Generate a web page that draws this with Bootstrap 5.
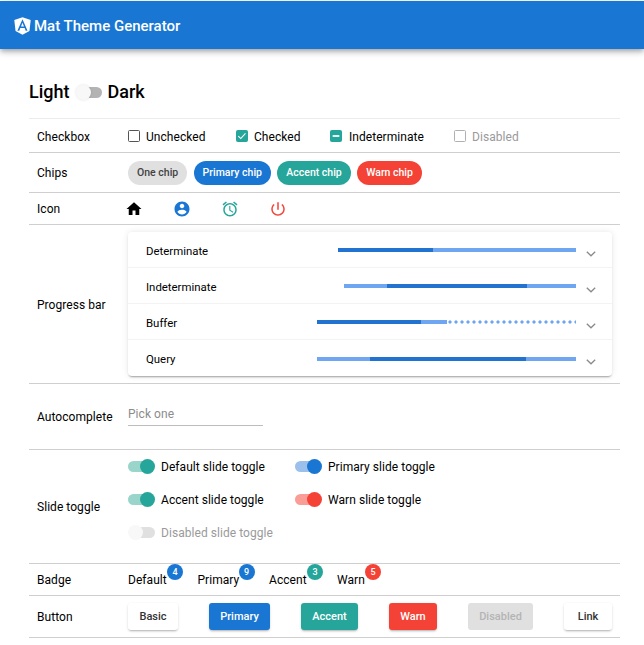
<!doctype html>
<html lang="en">
<head>
<meta charset="utf-8">
<title>Mat Theme Generator</title>
<link href="https://cdn.jsdelivr.net/npm/bootstrap@5.3.0/dist/css/bootstrap.min.css" rel="stylesheet">
<style>
body{font-family:Roboto,"Liberation Sans",sans-serif;font-size:12px;color:#000;background:#fff;padding-top:1px;overflow:hidden}
.app-bar{height:48px;background:#1976d2;color:#fff;padding:2px 0 0 14px;gap:3px;font-size:15px;font-weight:500;box-shadow:0 2px 4px -1px rgba(0,0,0,.2),0 4px 5px rgba(0,0,0,.14),0 1px 10px rgba(0,0,0,.12);position:relative}
.app-logo{width:17px;height:18px;margin-top:-1px}
.page-wrap{margin:0 24px 0 29px}
.mode-line{height:69px;gap:6px;font-size:18px;font-weight:500;padding-top:17px;line-height:24px}
.theme-row{border-top:1px solid #cfcfcf;letter-spacing:.05px}
.theme-row.first-row{border-top-color:#ececec}
.theme-row.last-row{border-bottom:1px solid #cfcfcf}
.row-name{width:99px;padding-left:8px;flex:none}
.row-check{height:34px;padding-top:2px}.row-chip{height:40px}.row-icon{height:32px}.row-prog{height:159px}.row-auto{height:66px}.row-slide{height:114px}.row-badge{height:32px}.row-btn{height:43px}
.row-prog .row-name{padding-top:2px}
.check-item{gap:6px;margin-right:24px}
.check-wide{gap:7px}
.check-box{width:12px;height:12px;border:1.5px solid #555;border-radius:1.5px;flex:none;margin-top:-1px}
.check-box.on{background:#26a69a;border-color:#26a69a}
.check-box.off{border-color:#b0b0b0}
.check-box svg{display:block;width:100%;height:100%}
.muted-text{color:#9a9a9a}
.chip-row{gap:6.4px}
.chip-pill{height:24px;border-radius:12px;padding:0 9px;font-weight:500;font-size:10.5px;line-height:24px;background:#e0e0e0;color:#424242;letter-spacing:0}
.bg-prim{background:#1976d2;color:#fff}.bg-acc{background:#26a69a;color:#fff}.bg-warn{background:#f44336;color:#fff}
.icon-set{gap:30px;margin-left:-3px}
.icon-set svg{width:18px;height:18px;display:block}
.panel-box{width:484px;margin-top:-1px;box-shadow:0 2px 2px -1px rgba(0,0,0,.35),0 0 6px rgba(0,0,0,.1);border-radius:4px;background:#fff}
.panel-line{height:36px;padding:0 0 0 18px;border-bottom:1px solid #f3f3f3}
.panel-line:last-child{border-bottom:0}
.panel-name{width:171px;flex:none;margin-top:5px;font-size:11.4px;letter-spacing:0}
.bar-zone{width:259px;flex:none;height:4px;margin-top:2px;justify-content:flex-end}
.bar-track{height:4px;background:#6ea6f2;position:relative}
.bar-fill{position:absolute;top:0;bottom:0;background:#2273cf}
.bar-dots{flex:1;height:4px;background-image:radial-gradient(circle,#6ea6f2 1.4px,transparent 1.8px);background-size:6px 4px;background-repeat:repeat-x}
.panel-chev{width:10px;height:6px;margin-left:10px;margin-top:9px;flex:none}
.pick-field{width:135px;height:26px;padding-top:5px;border-bottom:1px solid #bdbdbd;color:#8c8c8c;line-height:18px;margin-top:-7px}
.slide-grid{row-gap:15px;width:340px;margin-top:-14px}
.slide-item{width:167px;gap:6px;height:18px}
.slide-sw{width:27px;height:15px;position:relative;flex:none}
.slide-sw::before{content:"";position:absolute;left:0;right:5px;top:2px;bottom:2px;border-radius:6px;background:var(--trk)}
.slide-sw::after{content:"";position:absolute;right:0;top:0;width:15px;height:15px;border-radius:50%;background:var(--thm)}
.sw-acc{--trk:#9ad5cc;--thm:#26a69a}.sw-prim{--trk:#9cc0ec;--thm:#1976d2}.sw-warn{--trk:#fb9d97;--thm:#f44336}
.sw-off::before{left:7px;right:0;background:var(--trk)}
.sw-off::after{right:auto;left:0;background:#f8f8f8;box-shadow:0 0 3px rgba(0,0,0,.12)}
.sw-grey{--trk:#b3b3b3}.sw-dim{--trk:#e0e0e0}.sw-dim::after{background:#f8f8f8;box-shadow:none}
.sw-big{width:26px}
.badge-group{position:relative}
.badge-dot{position:absolute;width:16px;height:16px;border-radius:50%;top:-7px;font-size:9px;font-weight:500;line-height:16px;text-align:center}
.act-btn{height:27px;border-radius:3px;font-size:11px;font-weight:500;line-height:27px;text-align:center;margin-right:31px;box-shadow:0 2px 2px -1px rgba(0,0,0,.22),0 1px 3px rgba(0,0,0,.12);background:#fff;color:#333;letter-spacing:0}
.act-btn.bg-prim{color:#fff;background:#1976d2}.act-btn.bg-acc{color:#fff;background:#26a69a}.act-btn.bg-warn{color:#fff;background:#f44336}
.act-btn.is-off{background:#e0e0e0;color:#b4b4b4;box-shadow:none}
</style>
</head>
<body>
<nav class="app-bar d-flex align-items-center">
  <svg class="app-logo" viewBox="30 28 190 204" aria-hidden="true"><path fill="#fff" fill-rule="evenodd" d="M125 30 31.9 63.2 46.1 186.3 125 230l78.9-43.7L218.1 63.2zM125 52.1 182 182.6h-20.6l-11.7-29.2h-49.4l-11.7 29.2H66.8zm0 42.4-17 40.9h34z"/></svg>
  <span>Mat Theme Generator</span>
</nav>
<main class="page-wrap">
  <div class="mode-line d-flex align-items-center">
    <span>Light</span><span class="slide-sw sw-off sw-grey sw-big"></span><span>Dark</span>
  </div>

  <div class="theme-row first-row row-check d-flex align-items-center">
    <div class="row-name">Checkbox</div>
    <div class="d-flex">
      <div class="check-item d-flex align-items-center" style="width:84px"><span class="check-box"></span>Unchecked</div>
      <div class="check-item d-flex align-items-center" style="width:70px"><span class="check-box on"><svg viewBox="0 0 9 9"><path d="M1.2 4.6 3.4 6.8 7.6 2.2" fill="none" stroke="#fff" stroke-width="1"/></svg></span>Checked</div>
      <div class="check-item check-wide d-flex align-items-center" style="width:100px"><span class="check-box on"><svg viewBox="0 0 9 9"><path d="M1.5 4.5h6" fill="none" stroke="#fff" stroke-width="1.6"/></svg></span>Indeterminate</div>
      <div class="check-item d-flex align-items-center muted-text"><span class="check-box off"></span>Disabled</div>
    </div>
  </div>

  <div class="theme-row row-chip d-flex align-items-center">
    <div class="row-name">Chips</div>
    <div class="d-flex chip-row">
      <span class="chip-pill">One chip</span>
      <span class="chip-pill bg-prim">Primary chip</span>
      <span class="chip-pill bg-acc">Accent chip</span>
      <span class="chip-pill bg-warn">Warn chip</span>
    </div>
  </div>

  <div class="theme-row row-icon d-flex align-items-center">
    <div class="row-name">Icon</div>
    <div class="d-flex icon-set">
      <svg viewBox="0 0 24 24"><path fill="#000" d="M10 20v-6h4v6h5v-8h3L12 3 2 12h3v8z"/></svg>
      <svg viewBox="0 0 24 24"><path fill="#1976d2" d="M12 2C6.48 2 2 6.48 2 12s4.48 10 10 10 10-4.48 10-10S17.52 2 12 2zm0 3c1.66 0 3 1.34 3 3s-1.34 3-3 3-3-1.34-3-3 1.34-3 3-3zm0 14.2c-2.5 0-4.71-1.28-6-3.22.03-1.99 4-3.08 6-3.08 1.99 0 5.97 1.09 6 3.08-1.29 1.94-3.5 3.22-6 3.22z"/></svg>
      <svg viewBox="0 0 24 24"><path fill="#26a69a" d="M22 5.72l-4.6-3.86-1.29 1.53 4.6 3.86L22 5.72zM7.88 3.39L6.6 1.86 2 5.71l1.29 1.53 4.59-3.85zM12.5 8H11v6l4.75 2.85.75-1.23-4-2.37V8zM12 4c-4.97 0-9 4.03-9 9s4.02 9 9 9c4.97 0 9-4.03 9-9s-4.03-9-9-9zm0 16c-3.87 0-7-3.13-7-7s3.13-7 7-7 7 3.13 7 7-3.13 7-7 7z"/></svg>
      <svg viewBox="0 0 24 24"><path fill="#f44336" d="M13 3h-2v10h2V3zm4.83 2.17l-1.42 1.42C17.99 7.86 19 9.81 19 12c0 3.87-3.13 7-7 7s-7-3.13-7-7c0-2.19 1.01-4.14 2.58-5.42L6.17 5.17C4.23 6.82 3 9.26 3 12c0 4.97 4.03 9 9 9s9-4.03 9-9c0-2.74-1.23-5.18-3.17-6.83z"/></svg>
    </div>
  </div>

  <div class="theme-row row-prog d-flex align-items-center">
    <div class="row-name">Progress bar</div>
    <div class="panel-box">
      <div class="panel-line d-flex align-items-center"><span class="panel-name">Determinate</span>
        <div class="bar-zone d-flex"><div class="bar-track" style="width:238px"><div class="bar-fill" style="left:0;width:95px"></div></div></div>
        <svg class="panel-chev" viewBox="0 0 10 6"><path d="M.8.8 5 4.8 9.2.8" fill="none" stroke="#8a8a8a" stroke-width="1.3"/></svg></div>
      <div class="panel-line d-flex align-items-center"><span class="panel-name">Indeterminate</span>
        <div class="bar-zone d-flex"><div class="bar-track" style="width:232px"><div class="bar-fill" style="left:43px;width:140px"></div></div></div>
        <svg class="panel-chev" viewBox="0 0 10 6"><path d="M.8.8 5 4.8 9.2.8" fill="none" stroke="#8a8a8a" stroke-width="1.3"/></svg></div>
      <div class="panel-line d-flex align-items-center"><span class="panel-name">Buffer</span>
        <div class="bar-zone d-flex align-items-center"><div class="bar-track flex-none" style="width:130px"><div class="bar-fill" style="left:0;width:104px"></div></div><div class="bar-dots"></div></div>
        <svg class="panel-chev" viewBox="0 0 10 6"><path d="M.8.8 5 4.8 9.2.8" fill="none" stroke="#8a8a8a" stroke-width="1.3"/></svg></div>
      <div class="panel-line d-flex align-items-center"><span class="panel-name">Query</span>
        <div class="bar-zone d-flex"><div class="bar-track" style="width:259px"><div class="bar-fill" style="left:53px;width:156px"></div></div></div>
        <svg class="panel-chev" viewBox="0 0 10 6"><path d="M.8.8 5 4.8 9.2.8" fill="none" stroke="#8a8a8a" stroke-width="1.3"/></svg></div>
    </div>
  </div>

  <div class="theme-row row-auto d-flex align-items-center">
    <div class="row-name">Autocomplete</div>
    <div class="pick-field">Pick one</div>
  </div>

  <div class="theme-row row-slide d-flex align-items-center">
    <div class="row-name">Slide toggle</div>
    <div class="d-flex flex-wrap slide-grid">
      <div class="slide-item d-flex align-items-center"><span class="slide-sw sw-acc"></span>Default slide toggle</div>
      <div class="slide-item d-flex align-items-center"><span class="slide-sw sw-prim"></span>Primary slide toggle</div>
      <div class="slide-item d-flex align-items-center"><span class="slide-sw sw-acc"></span>Accent slide toggle</div>
      <div class="slide-item d-flex align-items-center"><span class="slide-sw sw-warn"></span>Warn slide toggle</div>
      <div class="slide-item d-flex align-items-center w-100 muted-text"><span class="slide-sw sw-off sw-dim"></span>Disabled slide toggle</div>
    </div>
  </div>

  <div class="theme-row row-badge d-flex align-items-center">
    <div class="row-name">Badge</div>
    <div class="d-flex">
      <span class="badge-group" style="width:69.5px"><span>Default</span><span class="badge-dot bg-prim" style="left:39px">4</span></span>
      <span class="badge-group" style="width:71.5px">Primary<span class="badge-dot bg-prim" style="left:41px">9</span></span>
      <span class="badge-group" style="width:68px">Accent<span class="badge-dot bg-acc" style="left:38px">3</span></span>
      <span class="badge-group">Warn<span class="badge-dot bg-warn" style="left:28px">5</span></span>
    </div>
  </div>

  <div class="theme-row last-row row-btn d-flex align-items-center">
    <div class="row-name">Button</div>
    <div class="d-flex">
      <span class="act-btn" style="width:50px">Basic</span>
      <span class="act-btn bg-prim" style="width:61px">Primary</span>
      <span class="act-btn bg-acc" style="width:57px">Accent</span>
      <span class="act-btn bg-warn" style="width:48px">Warn</span>
      <span class="act-btn is-off" style="width:65px">Disabled</span>
      <span class="act-btn" style="width:48px;margin-right:0">Link</span>
    </div>
  </div>
</main>
<script src="https://cdn.jsdelivr.net/npm/bootstrap@5.3.0/dist/js/bootstrap.bundle.min.js"></script>
</body>
</html>
